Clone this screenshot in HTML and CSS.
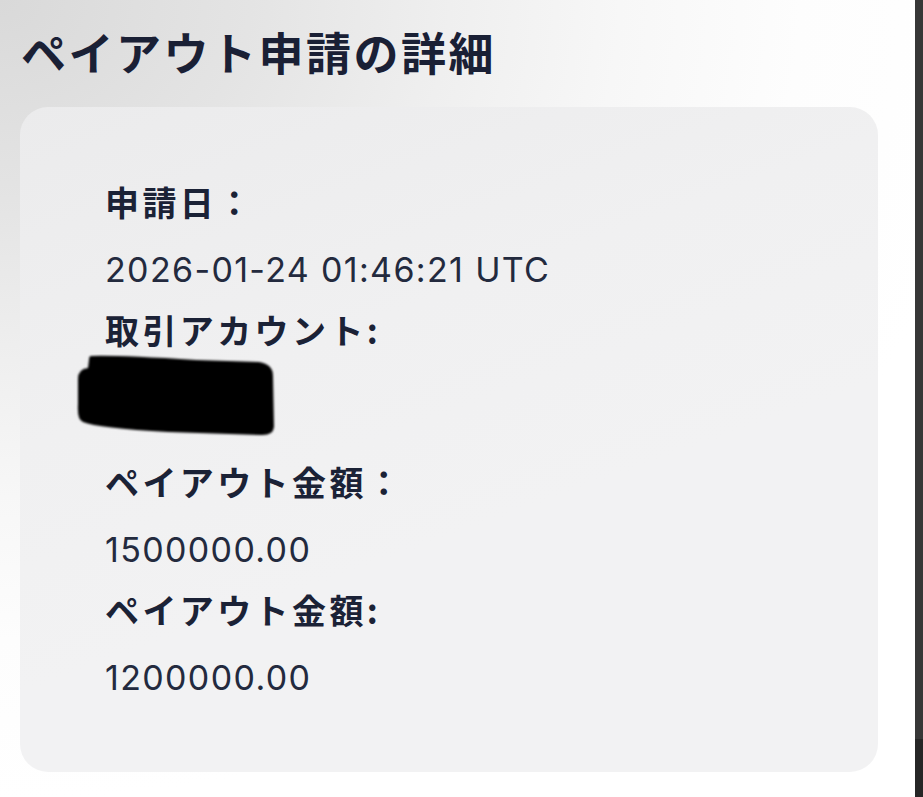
FILE: index.html
```html
<!DOCTYPE html>
<html lang="ja">
<head>
<meta charset="utf-8">
<title>ペイアウト申請の詳細</title>
<link rel="stylesheet" href="styles.css">
</head>
<body>
<div class="screen">
  <main class="main">
    <h1 class="title">ペイアウト申請の詳細</h1>
    <section class="card">
      <div class="label">申請日：</div>
      <div class="value">2026-01-24 01:46:21 UTC</div>
      <div class="label">取引アカウント:</div>
      <div class="redacted">
        <svg class="blob" viewBox="0 0 200 84" width="200" height="84" aria-hidden="true">
          <defs><filter id="soft" x="-5%" y="-5%" width="110%" height="110%"><feGaussianBlur stdDeviation="1.1"/></filter></defs>
          <path filter="url(#soft)" fill="#000" d="M15,2 Q40,1 120,6 L183,8 Q197,10 197,22 L198,73 Q197,82 184,81 L92,78 Q22,74 7,68 Q1,66 2,50 L2,25 Q2,15 12,14 L13,6 Q13,2 15,2 Z"/>
        </svg>
      </div>
      <div class="label">ペイアウト金額：</div>
      <div class="value">1500000.00</div>
      <div class="label">ペイアウト金額:</div>
      <div class="value">1200000.00</div>
    </section>
  </main>
  <div class="edge"><div class="edge-bottom"></div></div>
</div>
</body>
</html>
```
FILE: styles.css
```css
html, body {
  margin: 0;
  padding: 0;
  overflow: hidden;
}
body {
  height: 797px;
  background: #ffffff;
}
.screen {
  display: flex;
  height: 797px;
}
.main {
  flex: 1;
  height: 797px;
  box-sizing: border-box;
  padding: 22px 0 0 20px;
  background: radial-gradient(1000px 800px at 0 0, #d9d9d9 0%, #e4e4e4 25%, #efefef 45%, #f7f7f7 62%, #fdfdfd 80%, #ffffff 100%);
}
.title {
  margin: 0 0 25px 0;
  padding-left: 1px;
  font-family: "Noto Sans CJK JP", "Noto Sans", sans-serif;
  font-weight: 700;
  font-size: 45px;
  line-height: 60px;
  letter-spacing: 2.5px;
  color: #1a2035;
}
.card {
  width: 858px;
  height: 665px;
  box-sizing: border-box;
  padding: 63px 0 0 85px;
  border-radius: 28px;
  background: linear-gradient(160deg, #ebebec 0%, #f0f0f1 35%, #f2f2f3 60%, #f2f2f3 100%);
}
.label {
  font-family: "Noto Sans CJK JP", "Noto Sans", sans-serif;
  font-weight: 700;
  font-size: 34px;
  line-height: 64px;
  letter-spacing: 3.4px;
  color: #1b2236;
  height: 64px;
}
.value {
  box-sizing: border-box;
  height: 64px;
  padding-top: 8px;
  font-family: "Inter", "Noto Sans", sans-serif;
  font-weight: 400;
  font-size: 34px;
  line-height: 56px;
  letter-spacing: 1.35px;
  color: #232a3e;
}
.redacted {
  height: 96px;
}
.blob {
  display: block;
  margin: -8px 0 0 -29px;
}
.edge {
  flex: 0 0 8px;
  height: 797px;
  display: flex;
  flex-direction: column;
  justify-content: flex-end;
  background: #373737;
}
.edge-bottom {
  height: 58px;
  background: #262626;
}
```
